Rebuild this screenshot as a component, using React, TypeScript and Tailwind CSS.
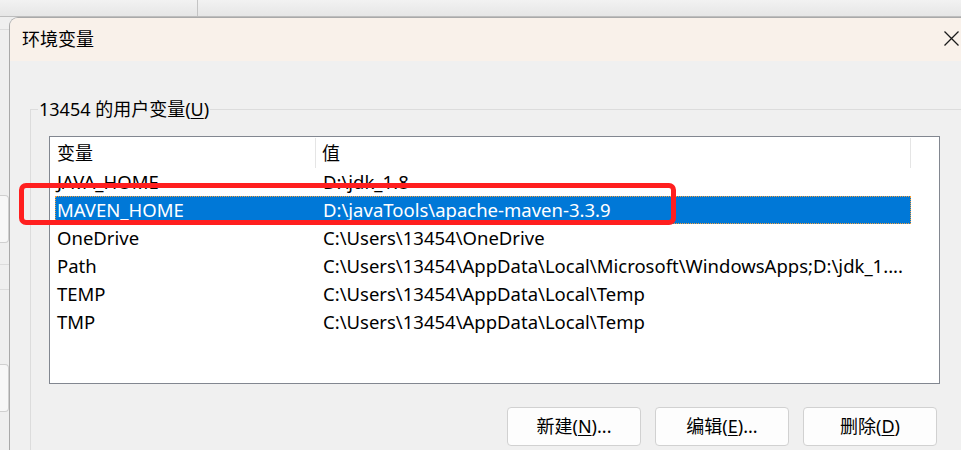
import React from 'react';

const rows = [
  { name: 'JAVA_HOME', value: 'D:\\jdk_1.8' },
  { name: 'MAVEN_HOME', value: 'D:\\javaTools\\apache-maven-3.3.9', selected: true },
  { name: 'OneDrive', value: 'C:\\Users\\13454\\OneDrive' },
  { name: 'Path', value: 'C:\\Users\\13454\\AppData\\Local\\Microsoft\\WindowsApps;D:\\jdk_1....' },
  { name: 'TEMP', value: 'C:\\Users\\13454\\AppData\\Local\\Temp' },
  { name: 'TMP', value: 'C:\\Users\\13454\\AppData\\Local\\Temp' },
];

const font = { fontFamily: '"Noto Sans", "Noto Sans CJK SC", sans-serif' };

const Btn = ({ label, hot, tail }: { label: string; hot: string; tail: string }) => (
  <button className="w-[134px] h-[39px] rounded-[4px] border border-[#d1d1d1] bg-[#fdfdfd] text-[18px] text-black flex items-center justify-center">
    {label}(<span className="underline underline-offset-2">{hot}</span>){tail}
  </button>
);

const App = () => {
  return (
    <div className="w-[961px] h-[450px] bg-[#eeeeee] overflow-hidden relative flex flex-col" style={font}>
      {/* window behind */}
      <div className="h-[17px] shrink-0 flex bg-gradient-to-b from-[#f2f2f2] to-[#e6e6e6] border-b border-[#bdbdbd]">
        <div className="w-[198px] border-r border-[#c4c4c4]" />
      </div>
      <div className="flex flex-1 min-h-0">
        <div className="w-[9px] shrink-0 flex flex-col bg-[#efefef]">
          <div className="h-[13px] border-b border-[#dcdcdc]" />
          <div className="h-[165px]" />
          <div className="h-[48px] rounded-r-[4px] border border-l-0 border-[#cfcfcf] bg-[#f7f7f7]" />
          <div className="h-[22px] border-b border-[#dcdcdc]" />
          <div className="h-[25px] border-b border-[#dcdcdc]" />
          <div className="h-[74px]" />
          <div className="h-[48px] rounded-r-[4px] border border-l-0 border-[#cfcfcf] bg-[#f7f7f7]" />
        </div>

        {/* dialog */}
        <div className="flex-1 flex flex-col rounded-tl-[9px] border-l border-t border-[#a9a9a9] bg-[#f0f0f0] overflow-hidden">
          <div className="h-[43px] shrink-0 bg-[#f9f1ea] flex items-center pl-[12px] pr-[2px] justify-between">
            <span className="text-[18px] text-black">环境变量</span>
            <svg width="15" height="15" viewBox="0 0 15 15" className="mt-[-2px]">
              <path d="M0.5 0.5 L14.5 14.5 M14.5 0.5 L0.5 14.5" stroke="#1a1a1a" strokeWidth="1.3" />
            </svg>
          </div>

          <div className="flex-1 pt-[48px] pl-[20px]">
            <div className="relative border-l border-t border-[#dcdcdc] pt-[26px] pl-[18px] pr-[18px] h-[400px]">
              <div className="absolute left-[7px] top-[-15px] bg-[#f0f0f0] px-[1px] text-[18px] leading-[28px] text-black">
                13454 的用户变量(<span className="underline underline-offset-2">U</span>)
              </div>

              <div className="w-[891px] h-[248px] border border-[#828790] bg-white pt-[1px] pl-[5px]">
                <div className="flex h-[30px] items-center text-[18px] text-black">
                  <div className="w-[261px] pl-[2px] h-full flex items-center border-r border-[#e5e5e5]">变量</div>
                  <div className="w-[595px] pl-[6px] h-full flex items-center border-r border-[#e5e5e5]">值</div>
                </div>
                {rows.map((r) => (
                  <div
                    key={r.name}
                    className={`flex h-[28px] w-[856px] items-center text-[18.5px] whitespace-nowrap ${r.selected ? 'bg-[#0078d7] text-white outline outline-1 outline-dotted outline-[#f0a040] -outline-offset-1' : 'text-black'}`}
                  >
                    <div className="w-[261px] pl-[2px]">{r.name}</div>
                    <div className="w-[595px] pl-[7px] overflow-hidden">{r.value}</div>
                  </div>
                ))}
              </div>

              <div className="flex justify-end gap-[14px] mt-[23px] w-[888px]">
                <Btn label="新建" hot="N" tail="..." />
                <Btn label="编辑" hot="E" tail="..." />
                <Btn label="删除" hot="D" tail="" />
              </div>
            </div>
          </div>
        </div>
      </div>

      {/* annotation */}
      <div className="absolute left-[19px] top-[183px] w-[657px] h-[42px] border-[5px] border-[#ff1f1f] rounded-[7px] pointer-events-none" />
    </div>
  );
};

export default App;
